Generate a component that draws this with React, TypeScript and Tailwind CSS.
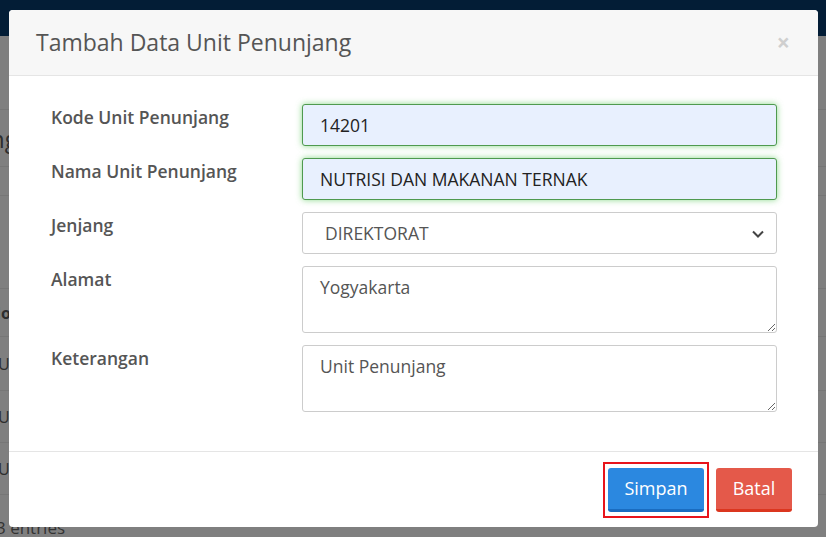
import React from "react";

export default function App() {
  const font = { fontFamily: '"Open Sans", "Liberation Sans", sans-serif' };
  return (
    <div className="relative w-[826px] h-[537px] overflow-hidden bg-[#7f7f7f]" style={font}>
      {/* page behind overlay */}
      <div className="h-[36px] bg-[#031d36]" />
      <div className="flex flex-col text-[#2e2e2e]">
        <div className="h-[74px] border-b border-[#767676]" />
        <div className="h-[57px] border-b border-[#767676] text-[24px] leading-[57px] -ml-[10px]">ng</div>
        <div className="h-[29px] border-b border-[#767676]" />
        <div className="h-[93px] border-b border-[#767676]" />
        <div className="h-[48px] border-b border-[#767676] text-[16px] font-bold leading-[48px] -ml-[12px]">No</div>
        <div className="h-[54px] border-b border-[#767676] text-[16px] leading-[54px] -ml-[2px]">UO</div>
        <div className="h-[52px] border-b border-[#767676] text-[16px] leading-[52px] -ml-[2px]">UO</div>
        <div className="h-[52px] border-b border-[#767676] text-[16px] leading-[52px] -ml-[2px]">UO</div>
        <div className="pt-[20px] text-[17px] leading-[26px] -ml-[4px] text-[#333]">3 entries</div>
      </div>

      {/* modal */}
      <div className="absolute left-[9px] top-[10px] w-[809px] h-[517px] bg-white rounded-[4px] flex flex-col">
        <div className="h-[66px] shrink-0 bg-[#f7f7f7] border-b border-[#e5e5e5] rounded-t-[4px] flex items-center justify-between pl-[27px] pr-[28px]">
          <span className="text-[23px] text-[#555] leading-none">Tambah Data Unit Penunjang</span>
          <span className="text-[23px] font-bold text-[#cfcfcf] leading-none">×</span>
        </div>

        <div className="flex-1 pt-[28px] pl-[42px] pr-[41px] flex flex-col gap-[12px]">
          <Row label="Kode Unit Penunjang">
            <input
              readOnly
              value="14201"
              className="w-full h-[42px] rounded-[3px] bg-[#e8f0fe] border border-[#4f9a4f] shadow-[0_0_6px_rgba(102,204,102,0.75)] px-[17px] text-[17.5px] text-[#222] outline-none"
              style={font}
            />
          </Row>
          <Row label="Nama Unit Penunjang">
            <input
              readOnly
              value="NUTRISI DAN MAKANAN TERNAK"
              className="w-full h-[42px] rounded-[3px] bg-[#e8f0fe] border border-[#4f9a4f] shadow-[0_0_6px_rgba(102,204,102,0.75)] px-[17px] text-[17.5px] text-[#222] outline-none"
              style={font}
            />
          </Row>
          <Row label="Jenjang">
            <div className="relative w-full h-[42px] rounded-[3px] border border-[#cccccc] bg-white flex items-center pl-[22px] text-[17.5px] text-[#555]">
              DIREKTORAT
              <svg className="absolute right-[11px] top-[16px]" width="14" height="10" viewBox="0 0 14 10">
                <path d="M2 2.5 L7 7.5 L12 2.5" fill="none" stroke="#444" strokeWidth="2" />
              </svg>
            </div>
          </Row>
          <Row label="Alamat">
            <textarea
              readOnly
              value="Yogyakarta"
              className="w-full h-[67px] rounded-[3px] border border-[#cccccc] bg-white px-[17px] pt-[7px] text-[17.5px] text-[#555] outline-none block"
              style={font}
            />
          </Row>
          <Row label="Keterangan">
            <textarea
              readOnly
              value="Unit Penunjang"
              className="w-full h-[67px] rounded-[3px] border border-[#cccccc] bg-white px-[17px] pt-[7px] text-[17.5px] text-[#555] outline-none block"
              style={font}
            />
          </Row>
        </div>

        <div className="h-[76px] shrink-0 border-t border-[#e5e5e5] flex items-start justify-end pt-[10px] pr-[26px] gap-[7px]">
          <div className="border-[2px] border-[#e8141b] px-[3px] py-[4px]">
            <button className="block w-[96px] h-[44px] rounded-[3px] bg-[#2b88e0] border-b-[3px] border-[#1a6cc0] text-white text-[18px]" style={font}>
              Simpan
            </button>
          </div>
          <button className="mt-[6px] w-[76px] h-[44px] rounded-[3px] bg-[#e4594a] border-b-[3px] border-[#db361f] text-white text-[18px]" style={font}>
            Batal
          </button>
        </div>
      </div>
    </div>
  );
}

function Row({ label, children }: { label: string; children: React.ReactNode }) {
  return (
    <div className="flex items-start">
      <label className="w-[251px] shrink-0 pt-[1px] text-[17.5px] font-semibold text-[#555] leading-[24px]">{label}</label>
      <div className="flex-1">{children}</div>
    </div>
  );
}
